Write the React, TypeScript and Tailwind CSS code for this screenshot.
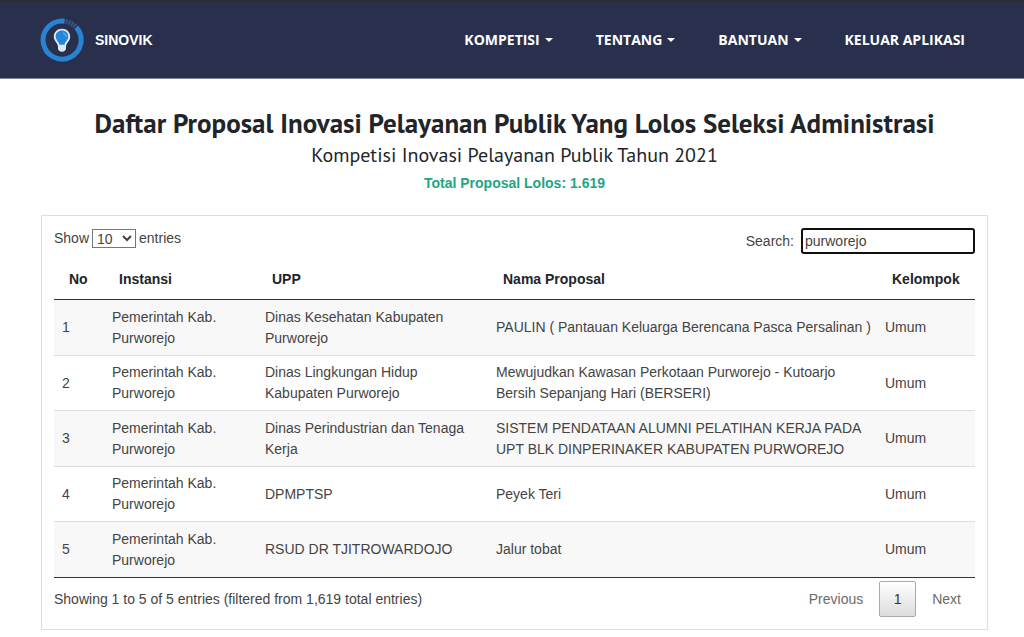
import React, { useState } from "react";

const menus = [
    { label: "KOMPETISI", dropdown: true },
    { label: "TENTANG", dropdown: true },
    { label: "BANTUAN", dropdown: true },
    { label: "KELUAR APLIKASI", dropdown: false },
];

const proposals = [
    {
        no: 1,
        instansi: "Pemerintah Kab. Purworejo",
        upp: "Dinas Kesehatan Kabupaten Purworejo",
        nama: "PAULIN ( Pantauan Keluarga Berencana Pasca Persalinan )",
        kelompok: "Umum",
    },
    {
        no: 2,
        instansi: "Pemerintah Kab. Purworejo",
        upp: "Dinas Lingkungan Hidup Kabupaten Purworejo",
        nama: "Mewujudkan Kawasan Perkotaan Purworejo - Kutoarjo Bersih Sepanjang Hari (BERSERI)",
        kelompok: "Umum",
    },
    {
        no: 3,
        instansi: "Pemerintah Kab. Purworejo",
        upp: "Dinas Perindustrian dan Tenaga Kerja",
        nama: "SISTEM PENDATAAN ALUMNI PELATIHAN KERJA PADA UPT BLK DINPERINAKER KABUPATEN PURWOREJO",
        kelompok: "Umum",
    },
    {
        no: 4,
        instansi: "Pemerintah Kab. Purworejo",
        upp: "DPMPTSP",
        nama: "Peyek Teri",
        kelompok: "Umum",
    },
    {
        no: 5,
        instansi: "Pemerintah Kab. Purworejo",
        upp: "RSUD DR TJITROWARDOJO",
        nama: "Jalur tobat",
        kelompok: "Umum",
    },
];

const Logo = () => (
    <svg width="44" height="44" viewBox="0 0 44 44" fill="none" aria-hidden="true">
        {/* ring with a faded piece at the top right */}
        <path d="M36.2 9.3A19 19 0 1 1 24.6 3.2" stroke="#2a82d2" strokeWidth="5" />
        <path d="M25.6 3.4A19 19 0 0 1 35.6 8.7" stroke="#36557f" strokeWidth="5" strokeDasharray="2 1" />
        <path
            d="M22 10.8c-4.800 0-8.200 3.400-8.200 7.700 0 4.500 3.700 6.200 4.200 9.800v2.200c0 2 1.700 3.200 4 3.200s4-1.200 4-3.200v-2.200c.5-3.600 4.200-5.300 4.200-9.800 0-4.300-3.400-7.700-8.200-7.700z"
            fill="#dfe7f1"
        />
        <path
            d="M22 12.500c-3.800 0-6.300 2.600-6.300 5.900 0 3.500 3.200 5 3.900 8.300h4.800c.7-3.300 3.900-4.800 3.900-8.300 0-3.300-2.500-5.900-6.300-5.900z"
            fill="#2385dc"
        />
        <path d="M23.500 15.200c1.500.5 2.500 1.700 2.700 3.300" stroke="#9dcbf3" strokeWidth="1" strokeLinecap="round" />
    </svg>
);

const Navbar = () => (
    <header className="flex h-[79px] items-center justify-between border-t-2 border-b border-t-[#2b2d33] border-b-[#7b8295] bg-[#28304e] pl-10 pr-[59px] text-white">
        <a href="#" className="flex items-center gap-[11px]">
            <Logo />
            <span className="font-['Liberation_Sans',Arial,sans-serif] text-sm font-bold">SINOVIK</span>
        </a>
        <nav className="flex items-center gap-[43px] font-['Open_Sans',sans-serif] text-sm font-bold">
            {menus.map((menu) => (
                <a key={menu.label} href="#" className="flex items-center gap-[5px]">
                    {menu.label}
                    {menu.dropdown && (
                        <span className="border-x-4 border-t-4 border-x-transparent border-t-white" />
                    )}
                </a>
            ))}
        </nav>
    </header>
);

const App = () => {
    const [search, setSearch] = useState("purworejo");

    return (
        <div className="bg-white font-['Liberation_Sans',Arial,sans-serif] text-sm text-[#444]">
            <Navbar />

            <main className="ml-[41px] mr-9 pt-7">
                <div className="flex flex-col items-center text-center">
                    <h1 className="font-['PT_Sans','Noto_Sans',sans-serif] text-[27px] leading-8 font-semibold text-[#212529]">
                        Daftar Proposal Inovasi Pelayanan Publik Yang Lolos Seleksi Administrasi
                    </h1>
                    <h2 className="font-['PT_Sans','Noto_Sans',sans-serif] text-[20px] leading-8 text-[#212529]">
                        Kompetisi Inovasi Pelayanan Publik Tahun 2021
                    </h2>
                    <p className="text-sm leading-6 font-bold text-[#1fa584]">Total Proposal Lolos: 1.619</p>
                </div>

                <section className="mt-5 border border-[#dedede] px-3 pt-3 pb-3">
                    <div className="flex items-start justify-between">
                        <label className="flex items-center gap-[3px]">
                            Show
                            <select
                                defaultValue="10"
                                className="mt-px h-[19px] w-11 border border-[#767676] bg-white text-sm leading-4"
                            >
                                <option>10</option>
                                <option>25</option>
                                <option>50</option>
                                <option>100</option>
                            </select>
                            entries
                        </label>
                        <label className="flex items-center gap-[7px]">
                            Search:
                            <input
                                type="text"
                                autoFocus
                                value={search}
                                onChange={(e) => setSearch(e.target.value)}
                                className="h-[26px] w-[174px] rounded-[3px] border-2 border-[#101010] px-[2px] outline-none"
                            />
                        </label>
                    </div>

                    <table className="mt-[5px] w-full table-fixed border-b border-[#333] text-left">
                        <colgroup>
                            <col className="w-[50px]" />
                            <col className="w-[153px]" />
                            <col className="w-[231px]" />
                            <col />
                            <col className="w-[98px]" />
                        </colgroup>
                        <thead>
                            <tr className="border-b border-[#333] text-[#212529]">
                                <th className="py-[10px] pl-[15px] leading-5">No</th>
                                <th className="py-[10px] pl-[15px] leading-5">Instansi</th>
                                <th className="py-[10px] pl-[15px] leading-5">UPP</th>
                                <th className="py-[10px] pl-[15px] leading-5">Nama Proposal</th>
                                <th className="py-[10px] pl-[15px] leading-5">Kelompok</th>
                            </tr>
                        </thead>
                        <tbody className="divide-y divide-[#dddddd] leading-[21px]">
                            {proposals.map((item) => (
                                <tr key={item.no} className="odd:h-14 even:h-[55px] odd:bg-[#f8f8f8]">
                                    <td className="py-[6px] pl-2">{item.no}</td>
                                    <td className="py-[6px] pl-2">{item.instansi}</td>
                                    <td className="py-[6px] pl-2">{item.upp}</td>
                                    <td className="py-[6px] pl-2">{item.nama}</td>
                                    <td className="py-[6px] pl-2">{item.kelompok}</td>
                                </tr>
                            ))}
                        </tbody>
                    </table>

                    <div className="flex items-center justify-between pt-[3px]">
                        <p>Showing 1 to 5 of 5 entries (filtered from 1,619 total entries)</p>
                        <div className="flex items-center text-[#6b6b6b]">
                            <button className="px-4">Previous</button>
                            <button className="h-9 w-[37px] rounded-[2px] border border-[#aaaaaa] bg-linear-to-b from-white to-[#dcdcdc] text-[#333]">
                                1
                            </button>
                            <button className="pl-4 pr-[14px]">Next</button>
                        </div>
                    </div>
                </section>
            </main>
        </div>
    );
};

export default App;
